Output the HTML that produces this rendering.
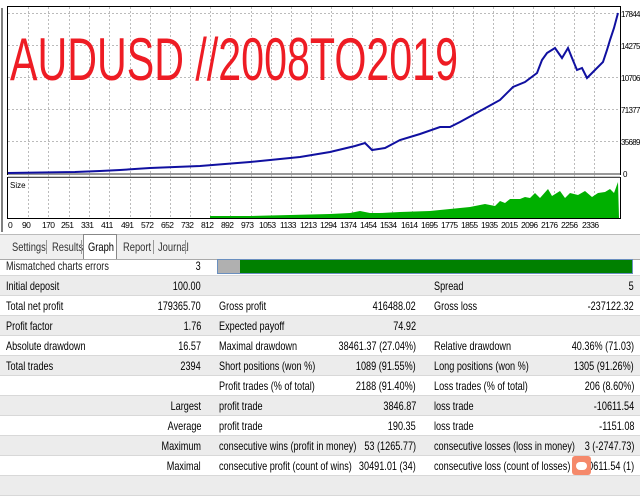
<!DOCTYPE html>
<html><head><meta charset="utf-8"><style>
body{margin:0;width:640px;height:480px;overflow:hidden;background:#fff;font-family:"Liberation Sans",sans-serif;font-size:12px;color:#000;position:relative}
.r{position:absolute;left:0;width:640px;height:20px;line-height:20px;border-bottom:1px solid #d8d8d8;box-sizing:border-box}
.g{background:#ececec}
.r span{position:absolute;white-space:nowrap;transform:scaleX(.76)}
.a,.c,.e{transform-origin:left center}
.b,.d,.f{transform-origin:right center}
.a{left:6px}.b{right:439px}.c{left:219px}.d{right:224px}.e{left:434px}.f{right:6px}
.tabs{position:absolute;left:0;top:234px;width:640px;height:24px;background:#f0f0f0;border-top:1px solid #bbb;border-bottom:1px solid #aaa}
.tabs span{position:absolute;top:5px;color:#333;transform:scaleX(.78);transform-origin:left center}
.sep{position:absolute;top:5px;width:1px;height:14px;background:#999}
</style></head><body>
<svg width="640" height="232" style="position:absolute;left:0;top:0">
<rect x="0" y="0" width="640" height="232" fill="#fff"/>
<line x1="2" y1="8" x2="2" y2="232" stroke="#000" stroke-width="1"/>
<rect x="7.5" y="6.5" width="613" height="168" fill="#fff" stroke="#000"/>
<g stroke="#bbb" stroke-dasharray="2,2">
<line x1="8" y1="13.5" x2="620" y2="13.5"/><line x1="8" y1="45.5" x2="620" y2="45.5"/><line x1="8" y1="77.5" x2="620" y2="77.5"/><line x1="8" y1="109.5" x2="620" y2="109.5"/><line x1="8" y1="141.5" x2="620" y2="141.5"/>
<path d="M28.5 7V218M48.5 7V218M69.5 7V218M89.5 7V218M109.5 7V218M130.5 7V218M150.5 7V218M170.5 7V218M190.5 7V218M210.5 7V218M230.5 7V218M251.5 7V218M271.5 7V218M291.5 7V218M311.5 7V218M331.5 7V218M352.5 7V218M372.5 7V218M392.5 7V218M412.5 7V218M432.5 7V218M453.5 7V218M473.5 7V218M493.5 7V218M513.5 7V218M533.5 7V218M554.5 7V218M574.5 7V218M594.5 7V218"/>
</g>
<line x1="8" y1="174" x2="620" y2="174" stroke="#999" stroke-width="2"/>
<rect x="7.5" y="177.5" width="613" height="41" fill="none" stroke="#000"/>
<line x1="8" y1="177" x2="620" y2="177" stroke="#999" stroke-width="1"/>
<text x="10" y="80" fill="#ee1c24" font-size="60" textLength="448" lengthAdjust="spacingAndGlyphs" font-family="Liberation Sans">AUDUSD //2008TO2019</text>
<polyline fill="none" stroke="#1010a0" stroke-width="2" points="8,173 75,172 100,171 120,170 150,168 200,166 250,162 300,157 330,152 355,146 365,143 372,150 385,148 400,140 420,134 440,127 450,127 460,122 480,111 500,100 513,87 525,82 537,73 542,60 547,53 555,48 562,58 568,48 572,58 577,70 582,68 587,78 593,72 603,62 607,50 610,40 614,28 618,13"/>
<path fill="#00b000" d="M210,218 L210,216 250,216 290,215 330,214 350,213 360,211 370,213 380,213 400,212 430,211 450,209 470,207 485,204 495,206 500,201 505,203 510,199 520,199 525,197 530,198 535,193 540,198 548,189 552,196 560,191 565,198 570,193 578,195 585,191 592,197 598,193 605,192 610,189 614,193 618,182 619,218 Z"/>
<text x="10" y="188" font-size="8" fill="#000">Size</text>
<g font-size="8" fill="#000" letter-spacing="-0.7">
<text x="621" y="17">17844</text><text x="621" y="49">14275</text><text x="621" y="81">10706</text><text x="621" y="113">71377</text><text x="621" y="145">35689</text><text x="623" y="177">0</text>
</g>
<g font-size="8.5" fill="#000" letter-spacing="-0.6">
<text x="8" y="228">0</text><text x="22" y="228">90</text><text x="42" y="228">170</text><text x="61" y="228">251</text><text x="81" y="228">331</text><text x="101" y="228">411</text><text x="121" y="228">491</text><text x="141" y="228">572</text><text x="161" y="228">652</text><text x="181" y="228">732</text><text x="201" y="228">812</text><text x="221" y="228">892</text><text x="241" y="228">973</text><text x="259" y="228">1053</text><text x="280" y="228">1133</text><text x="300" y="228">1213</text><text x="320" y="228">1294</text><text x="340" y="228">1374</text><text x="360" y="228">1454</text><text x="380" y="228">1534</text><text x="401" y="228">1614</text><text x="421" y="228">1695</text><text x="441" y="228">1775</text><text x="461" y="228">1855</text><text x="481" y="228">1935</text><text x="501" y="228">2015</text><text x="521" y="228">2096</text><text x="541" y="228">2176</text><text x="561" y="228">2256</text><text x="582" y="228">2336</text>
</g>
</svg>
<div class="tabs">
<span style="left:12px">Settings</span><div class="sep" style="left:46px"></div>
<span style="left:52px">Results</span><div class="sep" style="left:81px"></div>
<div style="position:absolute;left:83px;top:-1px;width:32px;height:24px;background:#fff;border:1px solid #888;border-bottom:none"></div>
<span style="left:88px;color:#000">Graph</span>
<span style="left:123px">Report</span><div class="sep" style="left:153px"></div>
<span style="left:158px">Journal</span><div class="sep" style="left:185px"></div>
</div>
<div class="r" style="top:258px;height:18px;line-height:16px"><span class="a" style="color:#222">Mismatched charts errors</span><span class="b">3</span>
<div style="position:absolute;left:217px;top:1px;width:414px;height:13px;background:#008000;border:1px solid #6a8fbf"></div><div style="position:absolute;left:218px;top:2px;width:22px;height:13px;background:#b0b0b0"></div></div>
<div class="r g" style="top:276px"><span class="a">Initial deposit</span><span class="b">100.00</span><span class="e">Spread</span><span class="f">5</span></div>
<div class="r" style="top:296px"><span class="a">Total net profit</span><span class="b">179365.70</span><span class="c">Gross profit</span><span class="d">416488.02</span><span class="e">Gross loss</span><span class="f">-237122.32</span></div>
<div class="r g" style="top:316px"><span class="a">Profit factor</span><span class="b">1.76</span><span class="c">Expected payoff</span><span class="d">74.92</span></div>
<div class="r" style="top:336px"><span class="a">Absolute drawdown</span><span class="b">16.57</span><span class="c">Maximal drawdown</span><span class="d">38461.37 (27.04%)</span><span class="e">Relative drawdown</span><span class="f">40.36% (71.03)</span></div>
<div class="r g" style="top:356px"><span class="a">Total trades</span><span class="b">2394</span><span class="c">Short positions (won %)</span><span class="d">1089 (91.55%)</span><span class="e">Long positions (won %)</span><span class="f">1305 (91.26%)</span></div>
<div class="r" style="top:376px"><span class="c">Profit trades (% of total)</span><span class="d">2188 (91.40%)</span><span class="e">Loss trades (% of total)</span><span class="f">206 (8.60%)</span></div>
<div class="r g" style="top:396px"><span class="b">Largest</span><span class="c">profit trade</span><span class="d">3846.87</span><span class="e">loss trade</span><span class="f">-10611.54</span></div>
<div class="r" style="top:416px"><span class="b">Average</span><span class="c">profit trade</span><span class="d">190.35</span><span class="e">loss trade</span><span class="f">-1151.08</span></div>
<div class="r g" style="top:436px"><span class="b">Maximum</span><span class="c">consecutive wins (profit in money)</span><span class="d">53 (1265.77)</span><span class="e">consecutive losses (loss in money)</span><span class="f">3 (-2747.73)</span></div>
<div class="r" style="top:456px"><span class="b">Maximal</span><span class="c">consecutive profit (count of wins)</span><span class="d">30491.01 (34)</span><span class="e">consecutive loss (count of losses)</span><span class="f">-10611.54 (1)</span></div>
<div class="r g" style="top:476px"></div>
<div style="position:absolute;left:572px;top:456px;width:19px;height:19px;background:#f5896b;border-radius:3px"><div style="position:absolute;left:4px;top:6px;width:11px;height:8px;background:#fff;border-radius:4px"></div></div>
</body></html>
